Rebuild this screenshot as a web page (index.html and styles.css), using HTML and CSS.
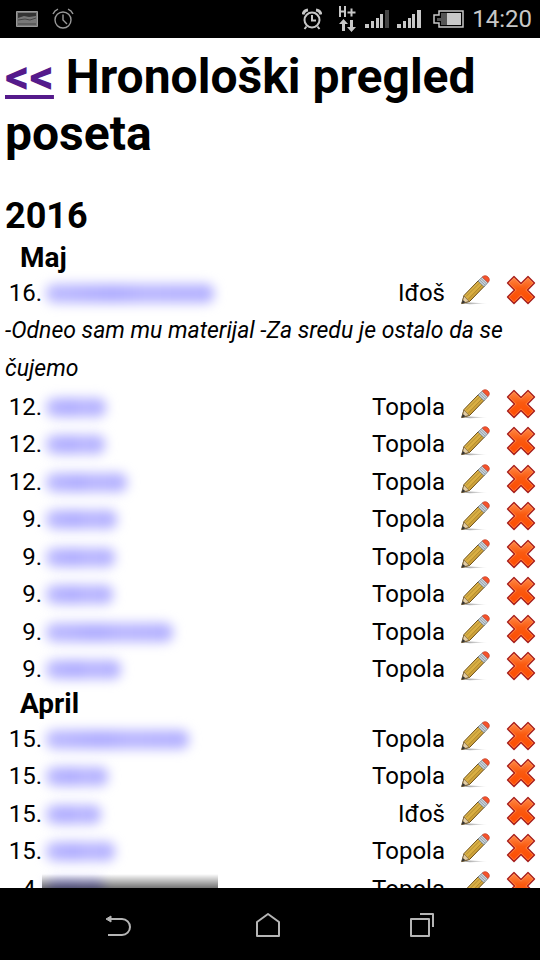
FILE: index.html
```html
<!DOCTYPE html>
<html lang="sr-Latn">
<head>
<meta charset="utf-8">
<meta name="viewport" content="width=device-width, initial-scale=1">
<title>Hronološki pregled poseta</title>
<link rel="stylesheet" href="styles.css">
</head>
<body>
<svg class="sprites" aria-hidden="true">
  <defs>
    <linearGradient id="wood" x1="0" y1="0" x2="1" y2="1"><stop offset="0" stop-color="#ecd06c"/><stop offset=".5" stop-color="#d9ae42"/><stop offset="1" stop-color="#a87b20"/></linearGradient>
    <linearGradient id="red" x1="0" y1="0" x2="0" y2="1"><stop offset="0" stop-color="#ff8a48"/><stop offset=".45" stop-color="#fa5a10"/><stop offset="1" stop-color="#ff4a00"/></linearGradient>
    <linearGradient id="shade" x1="0" y1="0" x2="1" y2="0"><stop offset="0" stop-color="#777"/><stop offset="1" stop-color="#777" stop-opacity="0"/></linearGradient>
  </defs>
  <symbol id="pencil" viewBox="0 0 30 30">
    <path d="M2 28.500 10 27.500 28 28.500 10 29.200Z" fill="url(#shade)" opacity=".8"/>
    <path d="M4 20.500 18.500 5.500 24.500 11 9.500 26.500 1.800 28.500Z" fill="url(#wood)" stroke="#694a12" stroke-width="1"/>
    <path d="M6 21.500 20 7.500M8 24.500 22.500 9.500" stroke="#96701f" stroke-width=".6" fill="none"/>
    <path d="M4 21 9 26.300 1.800 28.500Z" fill="#e3cda4" stroke="#75603d" stroke-width=".7"/>
    <path d="M2.800 25 5.500 27.300 1.500 28.800Z" fill="#333"/>
    <path d="M18 6 22.300 2 28 7.500 24 11.700Z" fill="#cdd4da" stroke="#6d7880" stroke-width=".8"/>
    <path d="M19.500 4.800 25.300 10.300M21 3.500 26.700 9" stroke="#82909a" stroke-width=".8"/>
    <path d="M22.300 2C24 .3 26.300.3 28 2S29.800 5.700 28 7.500Z" fill="#f8532a" stroke="#c2402a" stroke-width=".8"/>
  </symbol>
  <symbol id="cross" viewBox="0 0 30 30">
    <path d="M8 3 15 9.500 22 3 28.500 9 22 16 28.500 23 22 29.500 15 23 8 29.500 1.500 23 8 16 1.500 9Z" fill="#888" opacity=".3"/>
    <path d="M8 1.500 15 8.500 22 1.500 28.500 8 21.500 15 28.500 22 22 28.500 15 21.500 8 28.500 1.500 22 8.500 15 1.500 8Z" fill="url(#red)" stroke="#a8201f" stroke-width="1.300" stroke-linejoin="round"/>
    <path d="M8 3.200 15 10.200 22 3.200 26.800 8 19.800 15 26.800 22 22 26.800 15 19.800 8 26.800 3.200 22 10.200 15 3.200 8Z" fill="none" stroke="#ff9d62" stroke-width=".8" opacity=".7"/>
  </symbol>
</svg>

<header class="status">
  <div class="status-group">
    <svg width="22" height="16" viewBox="0 0 22 16"><path d="M.5.5h21v15H.5z" fill="#777" stroke="#999"/><path d="M2 2h18v3l-7 1-5-1-6 2z" fill="#333"/><path d="M2 9l7-1 5 1 6-2M2 13h18" stroke="#444" fill="none"/></svg>
    <svg class="dim" width="22" height="22" viewBox="0 0 22 22" fill="none" stroke="#999" stroke-width="1.400"><circle cx="11" cy="12" r="8"/><path d="M11 6.500V12l4 4M1 6Q2.500 2.500 6 1.200M21 6Q19.500 2.500 16 1.200"/></svg>
  </div>
  <div class="status-group">
    <svg class="alarm" width="20" height="22" viewBox="0 0 20 22" fill="none" stroke="#c8c8c8" stroke-width="2"><circle cx="10" cy="12" r="7.500"/><path d="M10 7v5.500h4M4.500 18.500 2.500 21M15.500 18.500l2 2.500"/><path d="M1 6.500Q2 2.500 6 2M19 6.500Q18 2.500 14 2" stroke-width="3"/></svg>
    <svg class="data" width="18" height="26" viewBox="0 0 18 26"><path d="M1 0v11M6 0v11M1 5.500h5M8.500 6.500h8M12.500 2.500v8" stroke="#c8c8c8" stroke-width="2" fill="none"/><path d="M4.500 13 9 18H6v7H3v-7H0zM12.500 26 8 21h3v-7h3v7h3z" fill="#c8c8c8"/></svg>
    <svg class="signal" width="24" height="18" viewBox="0 0 24 18" fill="#c8c8c8"><path d="M0 14h4v4H0zM6 11h3v7H6zM11 8h3v10h-3zM15 4h3v14h-3z"/><path d="M20 0h4v18h-4z" fill="#444"/></svg>
    <svg class="signal" width="24" height="18" viewBox="0 0 24 18" fill="#c8c8c8"><path d="M0 14h4v4H0zM6 11h3v7H6zM11 8h3v10h-3zM15 4h3v14h-3zM20 0h4v18h-4z"/></svg>
    <svg class="battery" width="31" height="18" viewBox="0 0 31 18"><path d="M6 1h24v16H6v-4H1V5h5z" fill="none" stroke="#c8c8c8" stroke-width="1.500"/><path d="M14 3h14v12H14z" fill="#c8c8c8"/><path d="M8 3h6v12H8v-4H4V8h4z" fill="#555"/></svg>
    <time class="clock">14:20</time>
  </div>
</header>

<main class="page">
  <h1><a href="#">&lt;&lt;</a> Hronološki pregled poseta</h1>
  <h2>2016</h2>
  <h3>Maj</h3>
  <ul class="visits" id="maj"></ul>
  <h3>April</h3>
  <ul class="visits" id="april"></ul>
</main>

<nav class="navbar">
  <button aria-label="Nazad"><svg width="26" height="22" viewBox="0 0 26 22" fill="none" stroke="#b5b5b5" stroke-width="2"><path d="M4 5h13a7.500 7.500 0 0 1 0 16H3"/><path d="M6 2v6L1 5z" fill="#b5b5b5" stroke-width="1"/></svg></button>
  <button aria-label="Početna"><svg width="24" height="26" viewBox="0 0 24 26" fill="none" stroke="#b5b5b5" stroke-width="2" stroke-linejoin="round"><path d="M1 10 12 2l11 8v14H1z"/></svg></button>
  <button aria-label="Nedavno"><svg width="26" height="26" viewBox="0 0 26 26" fill="none" stroke="#b5b5b5" stroke-width="2" stroke-linejoin="round"><path d="M2 7h18v17H2zM11 2h13v13"/></svg></button>
</nav>
<script src="app.js"></script>
</body>
</html>
```
FILE: styles.css
```css
* { box-sizing: border-box; }

body {
  margin: 0;
  height: 100vh;
  display: flex;
  flex-direction: column;
  background: #fff;
  color: #000;
  font-family: Roboto, "Liberation Sans", sans-serif;
}

svg { display: block; flex: none; }
.sprites { position: absolute; width: 0; height: 0; }

.status {
  flex: none;
  height: 38px;
  padding: 0 8px 0 16px;
  display: flex;
  justify-content: space-between;
  align-items: center;
  background: #000;
  color: #c8c8c8;
}
.status-group { display: flex; align-items: center; }
.dim { margin-left: 14px; }
.alarm { margin-right: 17px; }
.data { margin-right: 8px; }
.signal { margin-right: 8px; }
.battery { margin: 0 8px 0 4px; }
.clock { font-size: 24px; line-height: 38px; }

.page {
  flex: 1;
  min-height: 0;
  overflow: hidden;
  position: relative;
  padding: 10px 4px 0 5px;
}
.page::after {
  content: "";
  position: absolute;
  left: 42px;
  bottom: 0;
  width: 176px;
  height: 14px;
  background: linear-gradient(transparent, rgba(0, 0, 0, .55));
}

h1, h2, h3 { margin: 0; font-weight: 700; }
h1 { font-size: 48px; line-height: 57px; }
h1 a { color: #551a8b; text-decoration-thickness: 4px; }
h2 { margin-top: 33px; font-size: 36px; line-height: 43px; }
h3 { padding-left: 15px; font-size: 28px; line-height: 32px; }
h2 + h3 { margin-top: 4px; }

.visits {
  margin: 0;
  padding: 0;
  list-style: none;
  font-size: 25px;
  line-height: 1.5;
}
.visit { display: flex; height: 1.5em; }
.day, .place { font-size: 24px; line-height: 38px; }
.day { flex: none; width: 37px; text-align: right; }
.person { flex: 1; padding: 10px 0 0 4px; }
.person-name {
  display: block;
  height: 19px;
  border-radius: 8px;
  background: linear-gradient(90deg, #bdbbff, #aeabff 40%, #b9b6ff 60%, #b2afff);
  filter: blur(6px);
}
.action {
  flex: none;
  width: 30px;
  height: 30px;
  margin: 1px 0 0 15px;
}
.place + .action { margin-right: 1px; }
.note p { margin: 0; font-size: 23px; font-style: italic; line-height: 38px; }

.navbar {
  flex: none;
  height: 72px;
  padding: 2px 43px 0;
  display: flex;
  background: #000;
}
.navbar button {
  flex: 1;
  display: flex;
  justify-content: center;
  align-items: center;
  padding: 0;
  border: 0;
  background: none;
}
.navbar button:nth-child(2) { padding-right: 5px; }
```
FILE: app.js
```js
// Each visit: day, width of the masked name, place, optional note.
const visits = {
  maj: [
    [16, 168, "Iđoš", "-Odneo sam mu materijal -Za sredu je ostalo da se čujemo"],
    [12, 60, "Topola"],
    [12, 59, "Topola"],
    [12, 81, "Topola"],
    [9, 71, "Topola"],
    [9, 69, "Topola"],
    [9, 67, "Topola"],
    [9, 127, "Topola"],
    [9, 75, "Topola"]
  ],
  april: [
    [15, 143, "Topola"],
    [15, 62, "Topola"],
    [15, 55, "Iđoš"],
    [15, 69, "Topola"],
    [4, 58, "Topola"]
  ]
};

for (const [month, rows] of Object.entries(visits)) {
  document.getElementById(month).innerHTML = rows.map(([day, width, place, note]) => `
    <li class="visit">
      <span class="day">${day}.</span>
      <a class="person" href="#" aria-label="Osoba"><span class="person-name" style="width:${width}px"></span></a>
      <span class="place">${place}</span>
      <a class="action" href="#" aria-label="Izmeni"><svg width="30" height="30"><use href="#pencil"/></svg></a>
      <a class="action" href="#" aria-label="Obriši"><svg width="30" height="30"><use href="#cross"/></svg></a>
    </li>${note ? `<li class="note"><p>${note}</p></li>` : ""}`).join("");
}
```
